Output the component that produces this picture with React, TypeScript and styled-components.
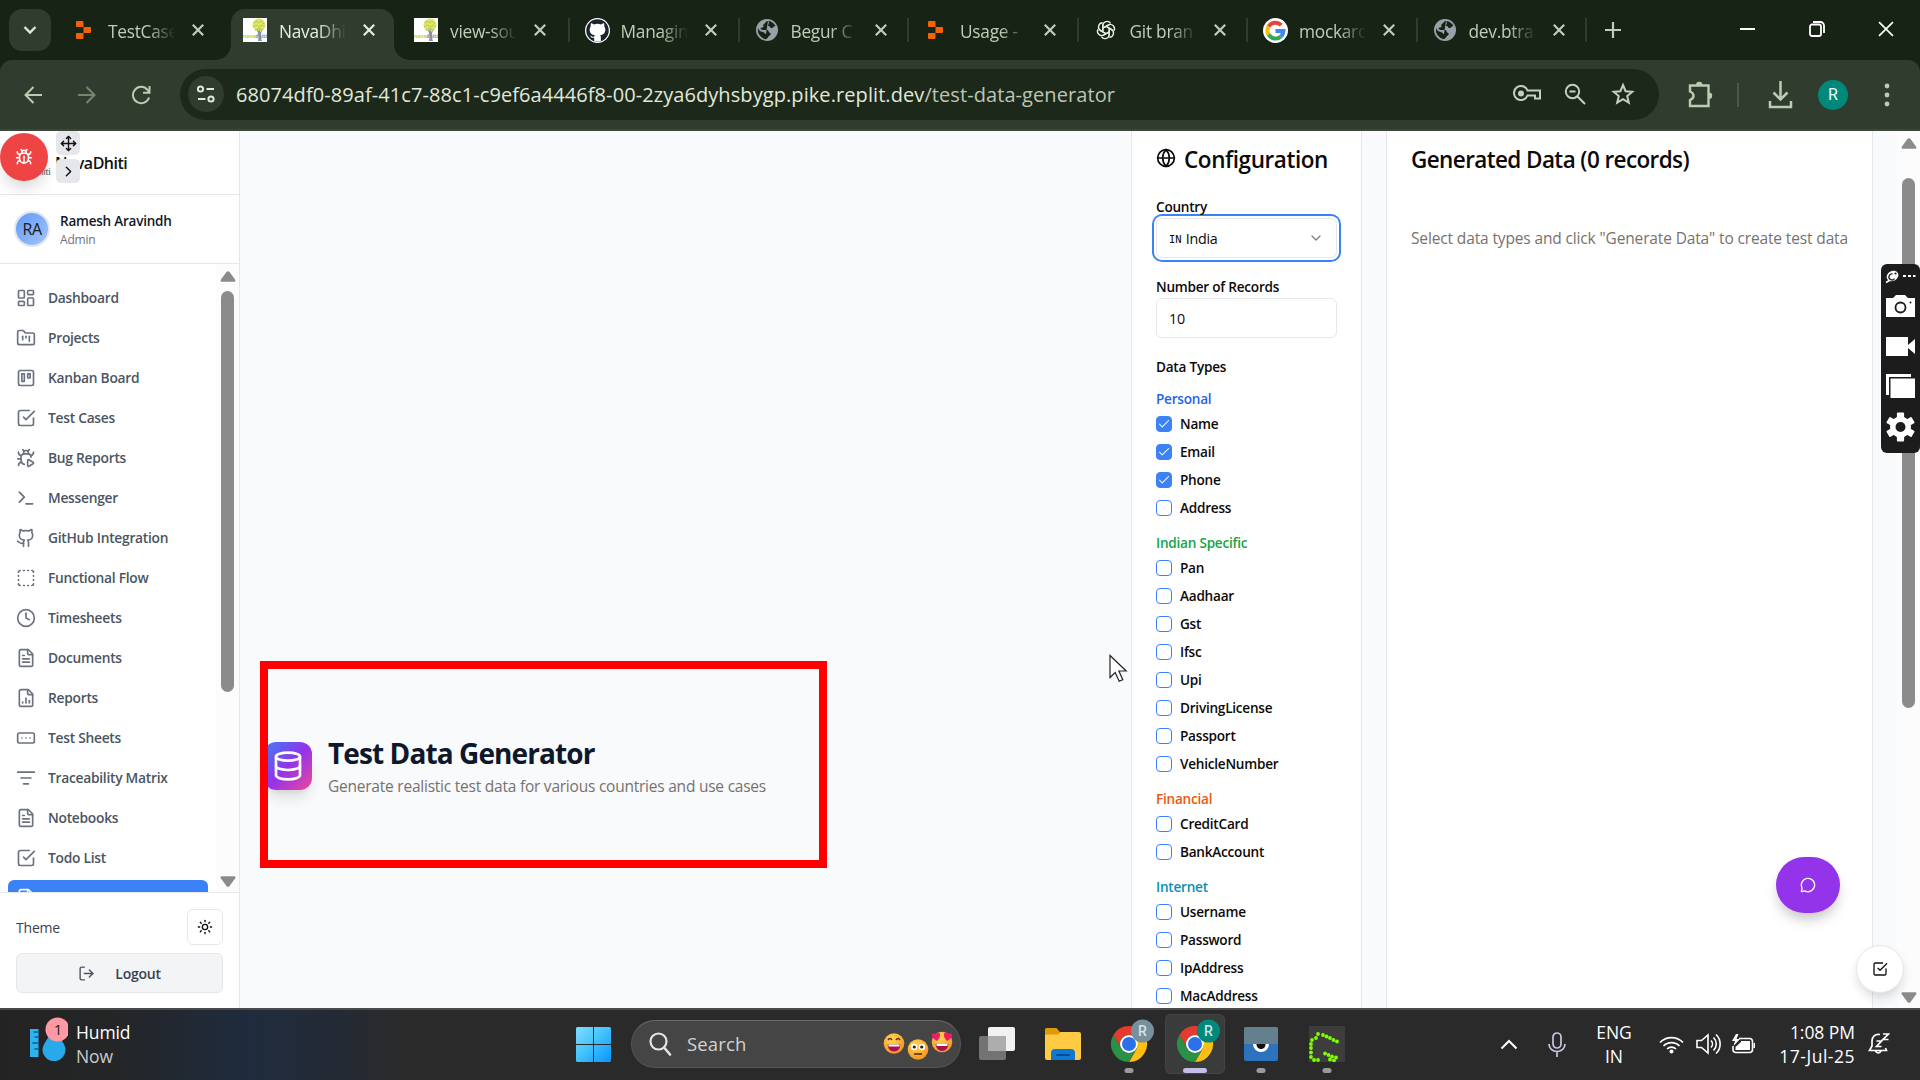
import React from "react";
import styled, { createGlobalStyle, css } from "styled-components";
import {
  LayoutDashboard, FolderKanban, Trello, BugPlay, Terminal, Github, SquareDashed, Clock, FileText,
  FileChartColumn, RectangleEllipsis, ListFilter, Sun, LogOut, Globe, ChevronDown, Check, Database,
  MessageCircle, Bug, Move, ChevronRight,
} from "lucide-react";

const Global = createGlobalStyle`
  * { box-sizing: border-box; }
  body { margin: 0; overflow: hidden; font-family: "Open Sans", "Noto Sans", sans-serif; }
  svg { display: block; flex: none; }
`;

const Screen = styled.div`
  position: relative;
  width: 1920px;
  height: 1080px;
  overflow: hidden;
  display: flex;
  flex-direction: column;
  background: #f8fafc;
`;

/* ---------- Browser chrome ---------- */
const TabStrip = styled.div`
  height: 60px;
  flex: none;
  display: flex;
  background: #172314;
  color: #bfceb8;
`;
const TabSearch = styled.div`
  width: 42px;
  height: 42px;
  margin: 9px 5px 0 9px;
  border-radius: 13px;
  background: #303d2e;
  display: grid;
  place-items: center;
`;
const Tab = styled.div<{ $w: number; $active?: boolean; $sep?: boolean }>`
  position: relative;
  width: ${(p) => p.$w}px;
  flex: none;
  height: 60px;
  display: flex;
  align-items: center;
  padding-left: 16px;
  ${(p) => p.$active && css`
    color: #e6eee0;
    &::before {
      content: "";
      position: absolute;
      inset: 9px 4px 0 4px;
      border-radius: 14px 14px 0 0;
      background: #303d2e;
    }
  `}
  ${(p) => p.$sep && css`
    &::after {
      content: "";
      position: absolute;
      right: -1px;
      top: 18px;
      width: 2px;
      height: 24px;
      background: #303d2e;
    }
  `}
`;
const Flare = styled.i<{ $right?: boolean }>`
  position: absolute;
  bottom: 0;
  ${(p) => (p.$right ? "right: -11px;" : "left: -11px;")}
  width: 15px;
  height: 15px;
  background: radial-gradient(circle at ${(p) => (p.$right ? "100% 0" : "0 0")}, transparent 14.5px, #303d2e 15px);
`;
const Favicon = styled.span`
  position: relative;
  width: 24px;
  height: 24px;
  display: grid;
  place-items: center;
  margin-right: 12px;
`;
const TabTitle = styled.span`
  position: relative;
  width: 66px;
  height: 28px;
  padding-top: 3px;
  line-height: 25px;
  font-size: 17.3px;
  letter-spacing: -0.25px;
  white-space: nowrap;
  overflow: hidden;
  mask-image: linear-gradient(90deg, #000 60%, transparent 102%);
`;
const TabClose = styled.span`
  position: relative;
  margin-left: 18px;
`;
const NewTab = styled.div`
  width: 46px;
  margin-left: 4px;
  display: grid;
  place-items: center;
`;
const WindowButtons = styled.div`
  display: flex;
  margin-left: auto;
  & > span {
    width: 69px;
    height: 58px;
    display: grid;
    place-items: center;
  }
`;
const Toolbar = styled.div`
  height: 71px;
  flex: none;
  display: flex;
  align-items: center;
  background: #303d2e;
  border-bottom: 2px solid #3c473a;
  color: #b9cdb2;
  border-radius: 12px 12px 0 0;
`;
const ToolbarBack = styled.div`
  background: #172314;
  flex: none;
`;
const NavButton = styled.span<{ $dim?: boolean }>`
  width: 54px;
  display: grid;
  place-items: center;
  opacity: ${(p) => (p.$dim ? 0.5 : 1)};
`;
const NavGroup = styled.div`
  display: flex;
  padding-left: 6px;
  width: 180px;
`;
const UrlBar = styled.div`
  width: 1479px;
  height: 51px;
  margin-top: -1px;
  border-radius: 26px;
  background: #1c291a;
  display: flex;
  align-items: center;
  padding-left: 8px;
  color: #c8cdc4;
`;
const SiteInfo = styled.span`
  width: 36px;
  height: 36px;
  border-radius: 50%;
  background: #303d2e;
  display: grid;
  place-items: center;
`;
const UrlText = styled.span`
  margin-left: 12px;
  font-size: 20px;
  letter-spacing: 0.08px;
  white-space: nowrap;
  color: #e0e8da;
  flex: 1;
  em { font-style: normal; color: #bcc5b7; }
`;
const UrlIcons = styled.div`
  display: flex;
  padding-right: 12px;
  & > span { width: 48px; display: grid; place-items: center; }
`;
const ToolbarRight = styled.div`
  display: flex;
  align-items: center;
  padding-left: 27px;
`;
const Divider = styled.i`
  width: 2px;
  height: 24px;
  margin: 0 29px 0 23px;
  background: #4b5a48;
`;
const Profile = styled.span`
  width: 30px;
  height: 30px;
  margin: 0 36px 0 25px;
  border-radius: 50%;
  background: #00897b;
  color: #e8fffb;
  font: 16px Roboto, sans-serif;
  display: grid;
  place-items: center;
`;

/* ---------- Page ---------- */
const Page = styled.div`
  height: 877px;
  flex: none;
  display: flex;
  overflow: hidden;
`;
const Sidebar = styled.aside`
  width: 240px;
  flex: none;
  display: flex;
  flex-direction: column;
  background: #fff;
  border-right: 1px solid #e5e7eb;
`;
const Brand = styled.div`
  height: 64px;
  display: flex;
  align-items: center;
  padding: 1px 0 0 38px;
  border-bottom: 1px solid #e5e7eb;
  font-size: 16px;
  font-weight: 600;
  letter-spacing: -0.5px;
  color: #111;
  small { font-size: 9px; width: 17px; padding-top: 16px; color: #777; }
`;
const User = styled.div`
  height: 69px;
  display: flex;
  align-items: center;
  padding: 0 0 1px 14px;
  border-bottom: 1px solid #e5e7eb;
`;
const Avatar = styled.span`
  width: 36px;
  height: 36px;
  border-radius: 50%;
  border: 2px solid #e2e6ef;
  background: linear-gradient(135deg, #609af8, #a5c4fb);
  display: grid;
  place-items: center;
  font-size: 16px;
  letter-spacing: -0.5px;
  color: #1c1917;
  margin-right: 10px;
`;
const UserText = styled.div`
  padding-top: 4px;
  line-height: 18px;
  font-size: 13.5px;
  font-weight: 600;
  letter-spacing: -0.22px;
  color: #111827;
  span { display: block; font-size: 12px; line-height: 19px; font-weight: 400; letter-spacing: -0.2px; color: #6b7280; }
`;
const NavScroll = styled.div`
  flex: 1;
  min-height: 0;
  display: flex;
  overflow: hidden;
`;
const NavList = styled.nav`
  width: 216px;
  padding: 16px 8px 0;
  display: flex;
  flex-direction: column;
  gap: 4px;
`;
const NavItem = styled.a<{ $active?: boolean }>`
  height: 36px;
  flex: none;
  display: flex;
  align-items: center;
  gap: 12px;
  padding: 0 0 1px 8px;
  border-radius: 6px;
  font-size: 13.8px;
  font-weight: 600;
  letter-spacing: -0.27px;
  color: ${(p) => (p.$active ? "#fff" : "#4b5563")};
  background: ${(p) => (p.$active ? "#3b82f6" : "transparent")};
  svg { color: ${(p) => (p.$active ? "#fff" : "#6b7280")}; }
`;
const Scrollbar = styled.div<{ $top: number; $size: number }>`
  width: 23px;
  flex: none;
  background: #fcfcfc;
  display: flex;
  flex-direction: column;
  align-items: center;
  padding: 7px 0 5px;
  & > i {
    width: 13px;
    height: ${(p) => p.$size}px;
    margin-top: ${(p) => p.$top}px;
    border-radius: 7px;
    background: #8b8b8b;
  }
  & > svg:last-child { margin-top: auto; transform: rotate(180deg); }
`;
const SideFooter = styled.div`
  height: 116px;
  flex: none;
  border-top: 1px solid #e5e7eb;
  padding: 16px 16px 0;
  font-size: 14px;
  color: #374151;
`;
const ThemeRow = styled.div`
  height: 36px;
  display: flex;
  align-items: center;
  justify-content: space-between;
  letter-spacing: -0.2px;
`;
const ThemeButton = styled.span`
  width: 36px;
  height: 36px;
  border: 1px solid #e5e7eb;
  border-radius: 6px;
  display: grid;
  place-items: center;
  color: #111;
`;
const Logout = styled.div`
  height: 40px;
  margin-top: 8px;
  border: 1px solid #e5e7eb;
  border-radius: 6px;
  background: #f3f4f6;
  display: flex;
  align-items: center;
  justify-content: center;
  gap: 20px;
  font-weight: 600;
  letter-spacing: -0.25px;
`;
const Main = styled.main`
  flex: 1;
  display: flex;
  background: #f8fafc;
`;
const Hero = styled.section`
  flex: 1;
  display: flex;
  align-items: flex-start;
  gap: 16px;
  padding: 611px 0 0 24px;
`;
const HeroIcon = styled.span`
  width: 48px;
  height: 48px;
  border-radius: 12px;
  background: linear-gradient(135deg, #3b82f6, #9333ea 50%, #ec4899);
  box-shadow: 0 10px 15px -3px rgba(0, 0, 0, 0.12), 0 4px 6px -4px rgba(0, 0, 0, 0.1);
  color: #fff;
  display: grid;
  place-items: center;
`;
const HeroText = styled.div`
  margin-top: -9px;
  h1 { margin: 0; font-size: 28px; line-height: 40px; font-weight: 700; letter-spacing: -0.9px; color: #0f172a; }
`;
const Muted = styled.p<{ $mt?: number; $ls: number }>`
  margin: ${(p) => p.$mt ?? 0}px 0 0;
  font-size: 15.5px;
  line-height: 26px;
  letter-spacing: ${(p) => p.$ls}px;
  color: #78716c;
  white-space: nowrap;
`;
const Card = styled.section<{ $w: number }>`
  width: ${(p) => p.$w}px;
  flex: none;
  padding: 14px 24px 0;
  margin-right: 24px;
  background: #fff;
  border: solid #e5e7eb;
  border-width: 0 1px;
  overflow: hidden;
  color: #0c0a09;
`;
const CardTitle = styled.h2<{ $ls: number }>`
  margin: 0;
  height: 30px;
  line-height: 30px;
  display: flex;
  align-items: center;
  gap: 8px;
  font-size: 22.5px;
  font-weight: 600;
  letter-spacing: ${(p) => p.$ls}px;
  white-space: nowrap;
  svg { margin-bottom: 4px; }
`;
const Label = styled.div<{ $mt: number; $c?: string }>`
  margin-top: ${(p) => p.$mt}px;
  height: 16px;
  line-height: 16px;
  font-size: 13.6px;
  font-weight: 600;
  letter-spacing: -0.24px;
  color: ${(p) => p.$c ?? "#0c0a09"};
`;
const Input = styled.div<{ $focus?: boolean }>`
  height: 40px;
  margin-top: 3px;
  padding: 0 12px;
  border: 1px solid #e5e7eb;
  border-radius: 6px;
  display: flex;
  align-items: center;
  background: #fff;
  font-size: 14.3px;
  letter-spacing: -0.25px;
  box-shadow: ${(p) => (p.$focus ? "0 0 0 2px #fff, 0 0 0 4px #3b82f6" : "none")};
  svg { margin-left: auto; color: #808080; }
  small { font-size: 10.5px; margin-right: 4px; font-family: "DejaVu Sans Mono", monospace; letter-spacing: 0; padding-top: 2px; }
`;
const Option = styled.div<{ $first: boolean }>`
  height: 16px;
  margin-top: ${(p) => (p.$first ? 9 : 12)}px;
  display: flex;
  align-items: center;
  gap: 8px;
  font-size: 13.6px;
  font-weight: 600;
  letter-spacing: -0.24px;
  line-height: 16px;
`;
const Box = styled.span<{ $on: boolean }>`
  width: 16px;
  height: 16px;
  border: 1px solid #3b82f6;
  border-radius: 4px;
  background: ${(p) => (p.$on ? "#3b82f6" : "#fff")};
  color: #fff;
  display: grid;
  place-items: center;
`;

/* ---------- Floating layers ---------- */
const Layer = styled.div<{ $x: number; $y: number; $w: number; $h: number }>`
  position: absolute;
  left: ${(p) => p.$x}px;
  top: ${(p) => p.$y}px;
  width: ${(p) => p.$w}px;
  height: ${(p) => p.$h}px;
  display: grid;
  place-items: center;
`;
const Highlight = styled(Layer)` border: 8px solid #fe0000; `;
const BugButton = styled(Layer)`
  border-radius: 50%;
  background: #ef4444;
  color: #fff;
  box-shadow: 0 10px 15px -3px rgba(0, 0, 0, 0.15);
`;
const MiniButton = styled(Layer)` border-radius: 5px; background: #e5e7eb; color: #111; `;
const ChatButton = styled(Layer)`
  border-radius: 28px;
  background: #9333ea;
  color: #fff;
  box-shadow: 0 8px 14px -3px rgba(0, 0, 0, 0.25);
`;
const TodoButton = styled(Layer)`
  border-radius: 50%;
  background: #fff;
  border: 1px solid #e5e7eb;
  color: #111;
  box-shadow: 0 6px 12px -2px rgba(0, 0, 0, 0.16);
`;
const Capture = styled(Layer)` border-radius: 6px; background: #1c1c1c; `;

/* ---------- Taskbar ---------- */
const Taskbar = styled.footer`
  height: 72px;
  flex: none;
  display: flex;
  align-items: center;
  padding-bottom: 2px;
  border-top: 2px solid #4a4a4b;
  background: linear-gradient(90deg, #232323 0, #242526 110px, #1f2c3e 250px, #252a33 350px, #2a2a2a 400px, #2a2a2a 100%);
  color: #fff;
`;
const Weather = styled.div`
  width: 564px;
  display: flex;
  align-items: center;
  padding-left: 28px;
  gap: 8px;
`;
const WeatherText = styled.div`
  margin-top: -1px;
  font-size: 17.5px;
  line-height: 24px;
  letter-spacing: -0.1px;
  span { display: block; color: #c9c9c9; }
`;
const Slot = styled.div<{ $active?: boolean; $dot?: boolean }>`
  position: relative;
  width: 60px;
  height: 60px;
  margin: 0 3px;
  border-radius: 6px;
  display: grid;
  place-items: center;
  ${(p) => p.$active && css`background: #3a3b3b; box-shadow: inset 0 0 0 1px #444;`}
  ${(p) => (p.$dot || p.$active) && css`
    &::after {
      content: "";
      position: absolute;
      bottom: 1px;
      left: 50%;
      transform: translateX(-50%);
      width: ${p.$active ? 24 : 9}px;
      height: 5px;
      border-radius: 3px;
      background: ${p.$active ? "#c3bfe6" : "#9a9a9a"};
    }
  `}
`;
const StartSlot = styled(Slot)` width: 59px; margin: 0; `;
const SearchBox = styled.div`
  width: 330px;
  height: 48px;
  margin: 0 3px 0 8px;
  border-radius: 24px;
  background: #454545;
  border: 1px solid #555;
  border-top-color: #6d6767;
  display: flex;
  align-items: center;
  padding: 0 6px 1px 16px;
  font-size: 18.5px;
  letter-spacing: 0.15px;
  color: #d2d2d2;
  span { flex: 1; margin-left: 15px; }
`;
const Tray = styled.div`
  margin-left: auto;
  display: flex;
  align-items: center;
  font-size: 17.5px;
  line-height: 24px;
  white-space: nowrap;
`;
const TrayItem = styled.div<{ $w: number; $right?: boolean }>`
  width: ${(p) => p.$w}px;
  display: grid;
  justify-items: ${(p) => (p.$right ? "end" : "center")};
`;
const ClockTime = styled.span` letter-spacing: -0.05px; `;
const ClockDate = styled.span` letter-spacing: 0.5px; `;
const Bell = styled(TrayItem)` padding-right: 18px; `;

/* ---------- Drawings ---------- */
const stroke = { fill: "none", stroke: "currentColor" } as const;

const CheckSquare = ({ size = 18 }: { size?: number }) => (
  <svg width={size} height={size} viewBox="0 0 24 24" {...stroke} strokeWidth="2" strokeLinecap="round" strokeLinejoin="round">
    <path d="m9 11 3 3L22 4" />
    <path d="M21 12v7a2 2 0 0 1-2 2H5a2 2 0 0 1-2-2V5a2 2 0 0 1 2-2h11" />
  </svg>
);
const Replit = () => (
  <svg width="20" height="20" viewBox="0 0 20 20" fill="#f26207">
    <path d="M2 2a1 1 0 0 1 1-1h5.500a1 1 0 0 1 1 1v5H3a1 1 0 0 1-1-1zM9.500 7H16a1 1 0 0 1 1 1v4a1 1 0 0 1-1 1H9.500zM2 14a1 1 0 0 1 1-1h6.500v5a1 1 0 0 1-1 1H3a1 1 0 0 1-1-1z" />
  </svg>
);
const Tree = () => (
  <svg width="24" height="24" viewBox="0 0 24 24">
    <rect width="24" height="24" fill="#fff" />
    <circle cx="16" cy="7" r="6.500" fill="#dbe66a" />
    <path d="M11 5l2-2 3 2 2-2 3 3M10 9l4-2 2 2 3-2 3 2M12 12l4-2 4 2" stroke="#a9bf2c" fill="none" strokeDasharray="1.5 1" />
    <path d="M15 23c1-4 .5-9-2-12l2.500 2 .7-3 .8 4 3-3c-3 4-2 9-1 12z" fill="#84929c" />
    <text x="0" y="20" fontSize="6" fontWeight="700" fill="#8b8f96" fontFamily="Open Sans, sans-serif" textLength="24" lengthAdjust="spacingAndGlyphs">
      <tspan fill="#c2cf2f">nava</tspan>dhiti
    </text>
  </svg>
);
const GitCat = () => (
  <svg width="25" height="25" viewBox="0 0 24 24">
    <circle cx="12" cy="12" r="12" fill="#fff" />
    <circle cx="12" cy="12" r="10.800" fill="#1f2430" />
    <path d="M8.800 22v-3c-3 .5-3-1.500-4.300-2 2-.4 2 1.600 4.300 1 0-.8.300-1.300.7-1.600-2.700-.4-5-1.500-5-5.400 0-1.200.4-2.200 1.100-3-.2-.6-.3-1.700.2-2.900 1 0 2 .6 2.800 1.100a10 10 0 0 1 6.800 0c.8-.5 1.800-1.100 2.800-1.100.5 1.200.4 2.300.2 2.900.7.800 1.100 1.800 1.100 3 0 3.900-2.300 5-5 5.400.5.400.7 1 .7 2v3.600a11 11 0 0 1-6.400 0z" fill="#fff" />
  </svg>
);
const GlobeFav = () => (
  <svg width="22" height="22" viewBox="0 0 22 22">
    <circle cx="11" cy="11" r="11" fill="#9aa0a8" />
    <path d="M12 2c-3 .5-2 2-4 3S9 8 6 8.500 5 11 8 11h3c2 0 1 2 3 3s0 2-1 3-1 2-3 3.200A9.500 9.500 0 0 1 2 9c1.500 3 2 3.500 5 4 1.500.3 1.500 2 3 2M12 2c3 0 6 2 7.500 5-2 0-2 2-4 2s-1-2-3-2 2-3-.5-5z" fill="#172314" />
  </svg>
);
const OpenAi = () => (
  <svg width="22" height="22" viewBox="0 0 24 24" fill="none" stroke="#e9ece6" strokeWidth="1.500">
    {[0, 60, 120, 180, 240, 300].map((a) => (
      <path key={a} transform={`rotate(${a} 12 12)`} d="M8.500 14V7.200a4.600 4.600 0 0 1 8.500-2.400M8.500 9.900l5.400-3.100a4 4 0 0 1 2-.5" />
    ))}
  </svg>
);
const Google = () => (
  <svg width="25" height="25" viewBox="0 0 25 25">
    <circle cx="12.500" cy="12.500" r="12.500" fill="#fff" />
    <g fill="none" strokeWidth="4">
      <path d="M18.200 7.200A8 8 0 0 0 5.600 8.500" stroke="#ea4335" />
      <path d="M5.600 8.500a8 8 0 0 0 0 8" stroke="#fbbc05" />
      <path d="M5.600 16.500a8 8 0 0 0 12.300 2" stroke="#34a853" />
      <path d="M17.900 18.500a8 8 0 0 0 2.600-5.500H12.500" stroke="#4285f4" />
    </g>
  </svg>
);
const Cross = ({ s = 12, w = 2.2, c = "currentColor" }: { s?: number; w?: number; c?: string }) => (
  <svg width={s} height={s} viewBox="0 0 12 12"><path d="M.8.8l10.400 10.400M11.200.8L.8 11.200" stroke={c} strokeWidth={(w * 12) / s} /></svg>
);
const Arrow = () => (
  <svg width="16" height="11" viewBox="0 0 16 11"><path d="M6.600.8q1.400-1.300 2.800 0l5.800 8q.8 2-1 2H1.800q-1.800 0-1-2z" fill="#8b8b8b" /></svg>
);
const Chrome = ({ badge }: { badge: string }) => (
  <svg width="50" height="50" viewBox="0 0 50 50">
    <path d="M9.410 16A18 18 0 0 1 40.590 16H25A9 9 0 0 0 17.200 29.500z" fill="#e33b2e" />
    <path d="M40.590 16A18 18 0 0 1 25 43L32.800 29.500A9 9 0 0 0 25 16z" fill="#fdc010" />
    <path d="M25 43A18 18 0 0 1 9.410 16L17.200 29.500A9 9 0 0 0 32.800 29.500z" fill="#2a9247" />
    <circle cx="25" cy="25" r="9" fill="#fff" />
    <circle cx="25" cy="25" r="7" fill="#2b70e8" />
    <circle cx="38.500" cy="12" r="11.500" fill={badge} />
    <text x="38.500" y="17" fontSize="14" fontWeight="500" fontFamily="Roboto, sans-serif" fill="#d6e4e6" textAnchor="middle">R</text>
  </svg>
);
const Emojis = () => (
  <svg width="72" height="46" viewBox="882 1021 72 46">
    <defs>
      <radialGradient id="face" cx=".4" cy=".3" r=".8"><stop offset="0" stopColor="#ffd84f" /><stop offset="1" stopColor="#f58a1f" /></radialGradient>
    </defs>
    <circle cx="894" cy="1043.500" r="10.300" fill="url(#face)" />
    <path d="M888 1040q2-3 4 0M896 1040q2-3 4 0" stroke="#5a2d10" strokeWidth="1.500" fill="none" />
    <path d="M887.500 1044.500h13q-1 7-6.500 7t-6.500-7z" fill="#a3124f" /><path d="M888.500 1044.500h11v2h-11z" fill="#fff" />
    <circle cx="942" cy="1042" r="10.300" fill="url(#face)" />
    <path d="M935.500 1044h13q-1 7-6.500 7t-6.500-7z" fill="#a3124f" /><path d="M936.500 1044h11v2h-11z" fill="#fff" />
    <path d="M937 1041c-8-4-5-10-1-7 3-4 7 1 1 7zM947 1041c-6-6-2-11 1-7 4-3 7 3-1 7z" fill="#ee1c6b" />
    <circle cx="918" cy="1049.500" r="10.300" fill="url(#face)" />
    <circle cx="914" cy="1047" r="3.200" fill="#fff" /><circle cx="922" cy="1047" r="3.200" fill="#fff" />
    <circle cx="914.300" cy="1047" r="1.600" fill="#3a1c08" /><circle cx="921.700" cy="1047" r="1.600" fill="#3a1c08" />
    <path d="M914 1054h8" stroke="#5a2d10" strokeWidth="1.600" />
  </svg>
);
const CaptureIcons = () => (
  <svg width="39" height="189" viewBox="0 0 39 189" fill="#fff">
    <ellipse cx="11.500" cy="12" rx="6.200" ry="5" transform="rotate(-30 11.500 12)" /><path d="M5 18.500l5-3" stroke="#fff" strokeWidth="1.500" />
    <path d="M13.500 14.500a3 3 0 1 1-2-4.500" fill="none" stroke="#1c1c1c" strokeWidth="1.300" /><circle cx="14.500" cy="9.500" r="1.100" fill="#1c1c1c" />
    <path d="M22 11h3v2h-3zM27 11h3v2h-3zM32 11h2.500v2H32z" />
    <path d="M5 34h7l3-3h9l3 3h7v19H5z" />
    <circle cx="19.500" cy="43.500" r="5" fill="none" stroke="#1c1c1c" strokeWidth="1.800" /><circle cx="29.500" cy="38.500" r="1" fill="#1c1c1c" />
    <path d="M5 73h22v19H5zM27 81l7-6v15l-7-6z" />
    <path d="M5 110h25v3H8v18H5z" /><path d="M9.500 114.500H34V134H9.500z" />
    <g transform="translate(19.500 163)">
      {[0, 60, 120].map((a) => <rect key={a} x="-3.600" y="-14.500" width="7.200" height="29" rx="1" transform={`rotate(${a})`} />)}
      <circle r="10.500" /><circle r="5" fill="#1c1c1c" />
    </g>
  </svg>
);
const greenDots = [
  [28, 15.5], [24.500, 14], [21, 12], [17.500, 10.500], [14, 9], [9, 8], [7, 12], [3, 14], [2, 18], [2, 22], [2, 26.500], [2, 31],
  [5, 34], [9, 34], [16, 27.5], [19.500, 29], [23, 30.500], [27, 31.5], [21, 33.5], [25, 34.5],
];

/* ---------- Data ---------- */
const tabs = [
  { icon: <Replit />, title: "TestCase", w: 171 },
  { icon: <Tree />, title: "NavaDhi", w: 171, active: true },
  { icon: <Tree />, title: "view-sou", w: 170.5, sep: true },
  { icon: <GitCat />, title: "Managin", w: 170, sep: true },
  { icon: <GlobeFav />, title: "Begur C", w: 169.5, sep: true },
  { icon: <Replit />, title: "Usage -", w: 169.5, sep: true },
  { icon: <OpenAi />, title: "Git bran", w: 169.5, sep: true },
  { icon: <Google />, title: "mockaro", w: 169.5, sep: true },
  { icon: <GlobeFav />, title: "dev.btra", w: 169.5, sep: true },
];
const nav: [React.ElementType, string][] = [
  [LayoutDashboard, "Dashboard"], [FolderKanban, "Projects"], [Trello, "Kanban Board"], [CheckSquare, "Test Cases"],
  [BugPlay, "Bug Reports"], [Terminal, "Messenger"], [Github, "GitHub Integration"], [SquareDashed, "Functional Flow"],
  [Clock, "Timesheets"], [FileText, "Documents"], [FileChartColumn, "Reports"], [RectangleEllipsis, "Test Sheets"],
  [ListFilter, "Traceability Matrix"], [FileText, "Notebooks"], [CheckSquare, "Todo List"],
];
const groups = [
  { name: "Personal", color: "#2563eb", items: ["Name", "Email", "Phone", "Address"] },
  { name: "Indian Specific", color: "#16a34a", items: ["Pan", "Aadhaar", "Gst", "Ifsc", "Upi", "DrivingLicense", "Passport", "VehicleNumber"] },
  { name: "Financial", color: "#ea580c", items: ["CreditCard", "BankAccount"] },
  { name: "Internet", color: "#0891b2", items: ["Username", "Password", "IpAddress", "MacAddress"] },
];
const selected = ["Name", "Email", "Phone"];

const BrowserChrome = () => (
  <>
    <TabStrip>
      <TabSearch>
        <svg width="14" height="10" viewBox="0 0 14 10"><path d="M1.500 2L7 7.500 12.500 2" {...stroke} stroke="#dfe8d9" strokeWidth="2.400" /></svg>
      </TabSearch>
      {tabs.map((t, i) => (
        <Tab key={i} $w={t.w} $active={t.active} $sep={t.sep}>
          {t.active && <><Flare /><Flare $right /></>}
          <Favicon>{t.icon}</Favicon>
          <TabTitle>{t.title}</TabTitle>
          <TabClose><Cross /></TabClose>
        </Tab>
      ))}
      <NewTab><svg width="16" height="16" viewBox="0 0 16 16"><path d="M8 0v16M0 8h16" stroke="#bfceb8" strokeWidth="2.200" /></svg></NewTab>
      <WindowButtons>
        <span><svg width="15" height="2"><rect width="15" height="2" fill="#fff" /></svg></span>
        <span><svg width="16" height="16" viewBox="0 0 16 16" fill="none" stroke="#fff" strokeWidth="1.800"><rect x="1" y="3.500" width="11" height="11.500" rx="2" /><path d="M4 1h7.500A3.500 3.500 0 0 1 15 4.500V12" /></svg></span>
        <span><Cross s={16} w={1.7} c="#fff" /></span>
      </WindowButtons>
    </TabStrip>
    <ToolbarBack>
      <Toolbar>
        <NavGroup>
          <NavButton><svg width="18" height="18" viewBox="0 0 18 18"><path d="M18 9H2M9.500 1L1.500 9l8 8" {...stroke} strokeWidth="2" /></svg></NavButton>
          <NavButton $dim><svg width="18" height="18" viewBox="0 0 18 18"><path d="M0 9h16M8.500 1l8 8-8 8" {...stroke} strokeWidth="2" /></svg></NavButton>
          <NavButton><svg width="20" height="20" viewBox="0 0 20 20"><path d="M18 12.500A8.200 8.200 0 1 1 16.500 4.800L18.500 7M18.500 1v6.800H12" {...stroke} strokeWidth="2" /></svg></NavButton>
        </NavGroup>
        <UrlBar>
          <SiteInfo>
            <svg width="20" height="18" viewBox="0 0 20 18" fill="none" stroke="#e0e8da" strokeWidth="2"><circle cx="4.500" cy="4" r="2.600" /><path d="M10.500 4H18M2 14h7.500" /><circle cx="15" cy="14" r="2.600" /></svg>
          </SiteInfo>
          <UrlText>68074df0-89af-41c7-88c1-c9ef6a4446f8-00-2zya6dyhsbygp.pike.replit.dev<em>/test-data-generator</em></UrlText>
          <UrlIcons>
            <span><svg width="28" height="18" viewBox="0 0 28 18" {...stroke} strokeWidth="2"><path d="M14.500 5.500H27v8h-5v-3h-7.500A7 7 0 1 1 14.500 5.500z" /><circle cx="8" cy="8.500" r="3" fill="currentColor" stroke="none" /></svg></span>
            <span><svg width="22" height="22" viewBox="0 0 22 22" {...stroke} strokeWidth="2"><circle cx="8.500" cy="8.500" r="6.700" /><path d="M13.500 13.500l7.500 7.500M5.500 8.500h6" /></svg></span>
            <span><svg width="24" height="24" viewBox="0 0 24 24" {...stroke} strokeWidth="2"><path d="M12 3l2.600 6.200 6.700.5-5.100 4.400 1.600 6.500L12 17.100l-5.800 3.500 1.600-6.500-5.100-4.400 6.700-.5z" /></svg></span>
          </UrlIcons>
        </UrlBar>
        <ToolbarRight>
          <svg width="28" height="30" viewBox="0 0 28 30"><path d="M4 5.500H22.500V26H4v-6q3.500-1.500 3.500-4.300T4 11.500z" {...stroke} strokeWidth="2.400" /><path d="M10 5a3.200 3.200 0 0 1 6.400 0zM23 12.500a3.200 3.200 0 0 1 0 6.400z" fill="currentColor" /></svg>
          <Divider />
          <svg width="25" height="30" viewBox="0 0 25 30" {...stroke} strokeWidth="2.500"><path d="M12.500 1v18M5.500 12.500l7 7 7-7M2 21v6h21v-6" /></svg>
          <Profile>R</Profile>
          <svg width="6" height="26" viewBox="0 0 6 26" fill="currentColor"><circle cx="3" cy="4" r="2.400" /><circle cx="3" cy="13" r="2.400" /><circle cx="3" cy="22" r="2.400" /></svg>
        </ToolbarRight>
      </Toolbar>
    </ToolbarBack>
  </>
);

const SideNav = () => (
  <Sidebar>
    <Brand><small>hiti</small>NavaDhiti</Brand>
    <User>
      <Avatar>RA</Avatar>
      <UserText>Ramesh Aravindh<span>Admin</span></UserText>
    </User>
    <NavScroll>
      <NavList>
        {nav.map(([Icon, name]) => <NavItem key={name}><Icon size={20} />{name}</NavItem>)}
        <NavItem $active><FileText size={20} /></NavItem>
      </NavList>
      <Scrollbar $top={9} $size={401}><Arrow /><i /><Arrow /></Scrollbar>
    </NavScroll>
    <SideFooter>
      <ThemeRow>Theme<ThemeButton><Sun size={16} /></ThemeButton></ThemeRow>
      <Logout><LogOut size={17} color="#4b5563" />Logout</Logout>
    </SideFooter>
  </Sidebar>
);

const Content = () => (
  <Main>
    <Hero>
      <HeroIcon><Database size={32} /></HeroIcon>
      <HeroText>
        <h1>Test Data Generator</h1>
        <Muted $ls={-0.23}>Generate realistic test data for various countries and use cases</Muted>
      </HeroText>
    </Hero>
    <Card $w={231}>
      <CardTitle $ls={-0.42}><Globe size={20} />Configuration</CardTitle>
      <Label $mt={24}>Country</Label>
      <Input $focus><small>IN</small>India<ChevronDown size={16} /></Input>
      <Label $mt={21}>Number of Records</Label>
      <Input>10</Input>
      <Label $mt={21}>Data Types</Label>
      {groups.map((g, gi) => (
        <React.Fragment key={g.name}>
          <Label $mt={gi ? 19 : 16} $c={g.color}>{g.name}</Label>
          {g.items.map((it, i) => (
            <Option key={it} $first={i === 0}>
              <Box $on={selected.includes(it)}>{selected.includes(it) && <Check size={14} strokeWidth={1.8} />}</Box>
              {it}
            </Option>
          ))}
        </React.Fragment>
      ))}
    </Card>
    <Card $w={487}>
      <CardTitle $ls={-0.6}>Generated Data (0 records)</CardTitle>
      <Muted $mt={50} $ls={-0.14}>Select data types and click "Generate Data" to create test data</Muted>
    </Card>
    <Scrollbar $top={29} $size={530}><Arrow /><i /><Arrow /></Scrollbar>
  </Main>
);

const Overlays = () => (
  <>
    <Highlight $x={260} $y={661} $w={567} $h={207} />
    <BugButton $x={0} $y={133} $w={48} $h={48}><Bug size={18} /></BugButton>
    <MiniButton $x={56} $y={131} $w={24} $h={24}><Move size={17} /></MiniButton>
    <MiniButton $x={56} $y={159} $w={24} $h={24}><ChevronRight size={17} /></MiniButton>
    <ChatButton $x={1776} $y={857} $w={64} $h={56}><MessageCircle size={16} /></ChatButton>
    <TodoButton $x={1856} $y={945} $w={48} $h={48}><CheckSquare size={16} /></TodoButton>
    <Capture $x={1881} $y={264} $w={39} $h={189}><CaptureIcons /></Capture>
    <Layer $x={1109} $y={654} $w={19} $h={29}>
      <svg width="19" height="29" viewBox="0 0 19 29"><path d="M1 1.500v22l5.200-5 4 8.800 3.600-1.600-3.900-8.700h7.300z" fill="#fff" stroke="#222" strokeWidth="1.200" /></svg>
    </Layer>
  </>
);

const Desktop = () => (
  <Taskbar>
    <Weather>
      <svg width="40" height="58" viewBox="27.500 1015 40 58">
        <rect x="29.500" y="1029" width="8.500" height="28" fill="#2fb3ee" />
        <path d="M33 1032h5M34 1037h4M32 1043h6M34 1049h4" stroke="#0b5f9e" strokeWidth="1.500" />
        <path d="M53.500 1030q11.500 14 11.500 19.500a11.500 11.500 0 0 1-23 0q0-5.500 11.500-19.500z" fill="#28a9ea" />
        <circle cx="57" cy="1029.500" r="12" fill="#ff99a4" />
        <text x="57.500" y="1035" fontSize="15" textAnchor="middle" fill="#222" fontFamily="Open Sans, sans-serif">1</text>
      </svg>
      <WeatherText>Humid<span>Now</span></WeatherText>
    </Weather>
    <StartSlot>
      <svg width="35" height="35" viewBox="0 0 35 35">
        <defs><linearGradient id="win" x1="0" y1="0" x2="1" y2="1" gradientUnits="objectBoundingBox"><stop offset="0" stopColor="#82dcff" /><stop offset=".45" stopColor="#46c4fb" /><stop offset="1" stopColor="#0795ff" /></linearGradient></defs>
        <path d="M1.500 0H17v17H0V1.500Q0 0 1.500 0zM18 0h15.500Q35 0 35 1.500V17H18zM0 18h17v17H1.500Q0 35 0 33.500zM18 18h17v15.500q0 1.500-1.500 1.500H18z" fill="url(#win)" />
      </svg>
    </StartSlot>
    <SearchBox>
      <svg width="24" height="24" viewBox="0 0 24 24"><circle cx="10.500" cy="9.500" r="8" fill="none" stroke="#e4e4e4" strokeWidth="2.200" /><path d="M16 15.500l6 7" stroke="#e4e4e4" strokeWidth="2.600" strokeLinecap="round" /></svg>
      <span>Search</span>
      <Emojis />
    </SearchBox>
    <Slot>
      <svg width="36" height="34" viewBox="0 0 36 34"><rect x="9" width="27" height="24" rx="2" fill="#f2f2f2" /><rect y="9" width="27" height="24" rx="2" fill="#7b7b7b" fillOpacity=".9" /><path d="M9 9h18v15H9z" fill="#adadad" /></svg>
    </Slot>
    <Slot>
      <svg width="36" height="34" viewBox="0 0 36 34"><path d="M0 2.500Q0 1 1.500 1h10l3 3.500V12H0z" fill="#dd9a06" /><rect y="5" width="36" height="28" rx="2" fill="#ffcb45" /><path d="M0 5h16l-3 2.500H0z" fill="#dd9a06" /><path d="M6 33v-7q0-4 4-4h16q4 0 4 4v7z" fill="#0f78d0" /><path d="M12 28h12" stroke="#0a4d94" strokeWidth="1.800" strokeLinecap="round" /></svg>
    </Slot>
    <Slot $dot><Chrome badge="#78909c" /></Slot>
    <Slot $active><Chrome badge="#00897b" /></Slot>
    <Slot $dot>
      <svg width="34" height="34" viewBox="0 0 34 34"><rect width="34" height="34" rx="2" fill="#2c72bd" /><circle cx="17" cy="17" r="8" fill="#fff" /><circle cx="17" cy="17.500" r="4.500" fill="#111" /><path d="M0 2q0-2 2-2h30q2 0 2 2v15H0z" fill="#64808f" /></svg>
    </Slot>
    <Slot $dot>
      <svg width="36" height="36" viewBox="0 0 36 36">
        <rect width="36" height="36" fill="#3d3d3d" />
        {greenDots.map(([x, y]) => <circle key={`${x}-${y}`} cx={x} cy={y} r="1.900" fill="#7dff00" />)}
      </svg>
    </Slot>
    <Tray>
      <TrayItem $w={46}><svg width="18" height="12" viewBox="0 0 18 12"><path d="M1.500 10.500L9 3l7.500 7.500" stroke="#fff" strokeWidth="2" fill="none" /></svg></TrayItem>
      <TrayItem $w={50}><svg width="18" height="25" viewBox="0 0 18 25" fill="none" stroke="#c9c5e6" strokeWidth="1.700"><rect x="5" y="1" width="8" height="15" rx="4" /><path d="M1 12a8 7.500 0 0 0 16 0M9 19.500V25" /></svg></TrayItem>
      <TrayItem $w={64}><span>ENG</span><span>IN</span></TrayItem>
      <TrayItem $w={50}><svg width="25" height="19" viewBox="0 0 25 19" fill="none" stroke="#fff" strokeWidth="1.700"><path d="M1 7.500a16 16 0 0 1 23 0M4.500 11a11 11 0 0 1 16 0M8 14a6.500 6.500 0 0 1 9 0" /><circle cx="12.500" cy="16.500" r="2" fill="#fff" stroke="none" /></svg></TrayItem>
      <TrayItem $w={23}><svg width="25" height="22" viewBox="0 0 25 22" fill="none" stroke="#fff" strokeWidth="1.600"><path d="M1 7.500h4.500L12 2v18l-6.500-5.500H1zM15 7.500a5 5 0 0 1 0 7M17.500 4.500a9 9 0 0 1 0 13M20 1.500a13 13 0 0 1 0 19" /></svg></TrayItem>
      <TrayItem $w={48}><svg width="25" height="21" viewBox="0 0 25 21"><path d="M8 4.500h10.500a3 3 0 0 1 3 3v8a3 3 0 0 1-3 3H5a3 3 0 0 1-3-3V12" fill="none" stroke="#fff" strokeWidth="1.600" /><path d="M10 7h9v9H4.500v-3L10 8zM22.500 9H24v5h-1.500z" fill="#fff" /><path d="M5 0L1 7h3l-1.500 5L9 5H5.500L7.500 0z" fill="#fff" /></svg></TrayItem>
      <TrayItem $w={88} $right><ClockTime>1:08 PM</ClockTime><ClockDate>17-Jul-25</ClockDate></TrayItem>
      <Bell $w={65}>
        <svg width="22" height="24" viewBox="0 0 22 24" fill="none" stroke="#fff" strokeWidth="1.700"><path d="M12 2.500C7 1.500 4 5 4 9v5l-2.500 4.500h17L17.500 16M7.500 19a3 3 0 0 0 5.500 0" /><path d="M8.500 9h5l-5 5.500h5M15 2h5.500L15 7.500h5.500" /></svg>
      </Bell>
    </Tray>
  </Taskbar>
);

export default function App() {
  return (
    <Screen>
      <Global />
      <BrowserChrome />
      <Page>
        <SideNav />
        <Content />
      </Page>
      <Desktop />
      <Overlays />
    </Screen>
  );
}
